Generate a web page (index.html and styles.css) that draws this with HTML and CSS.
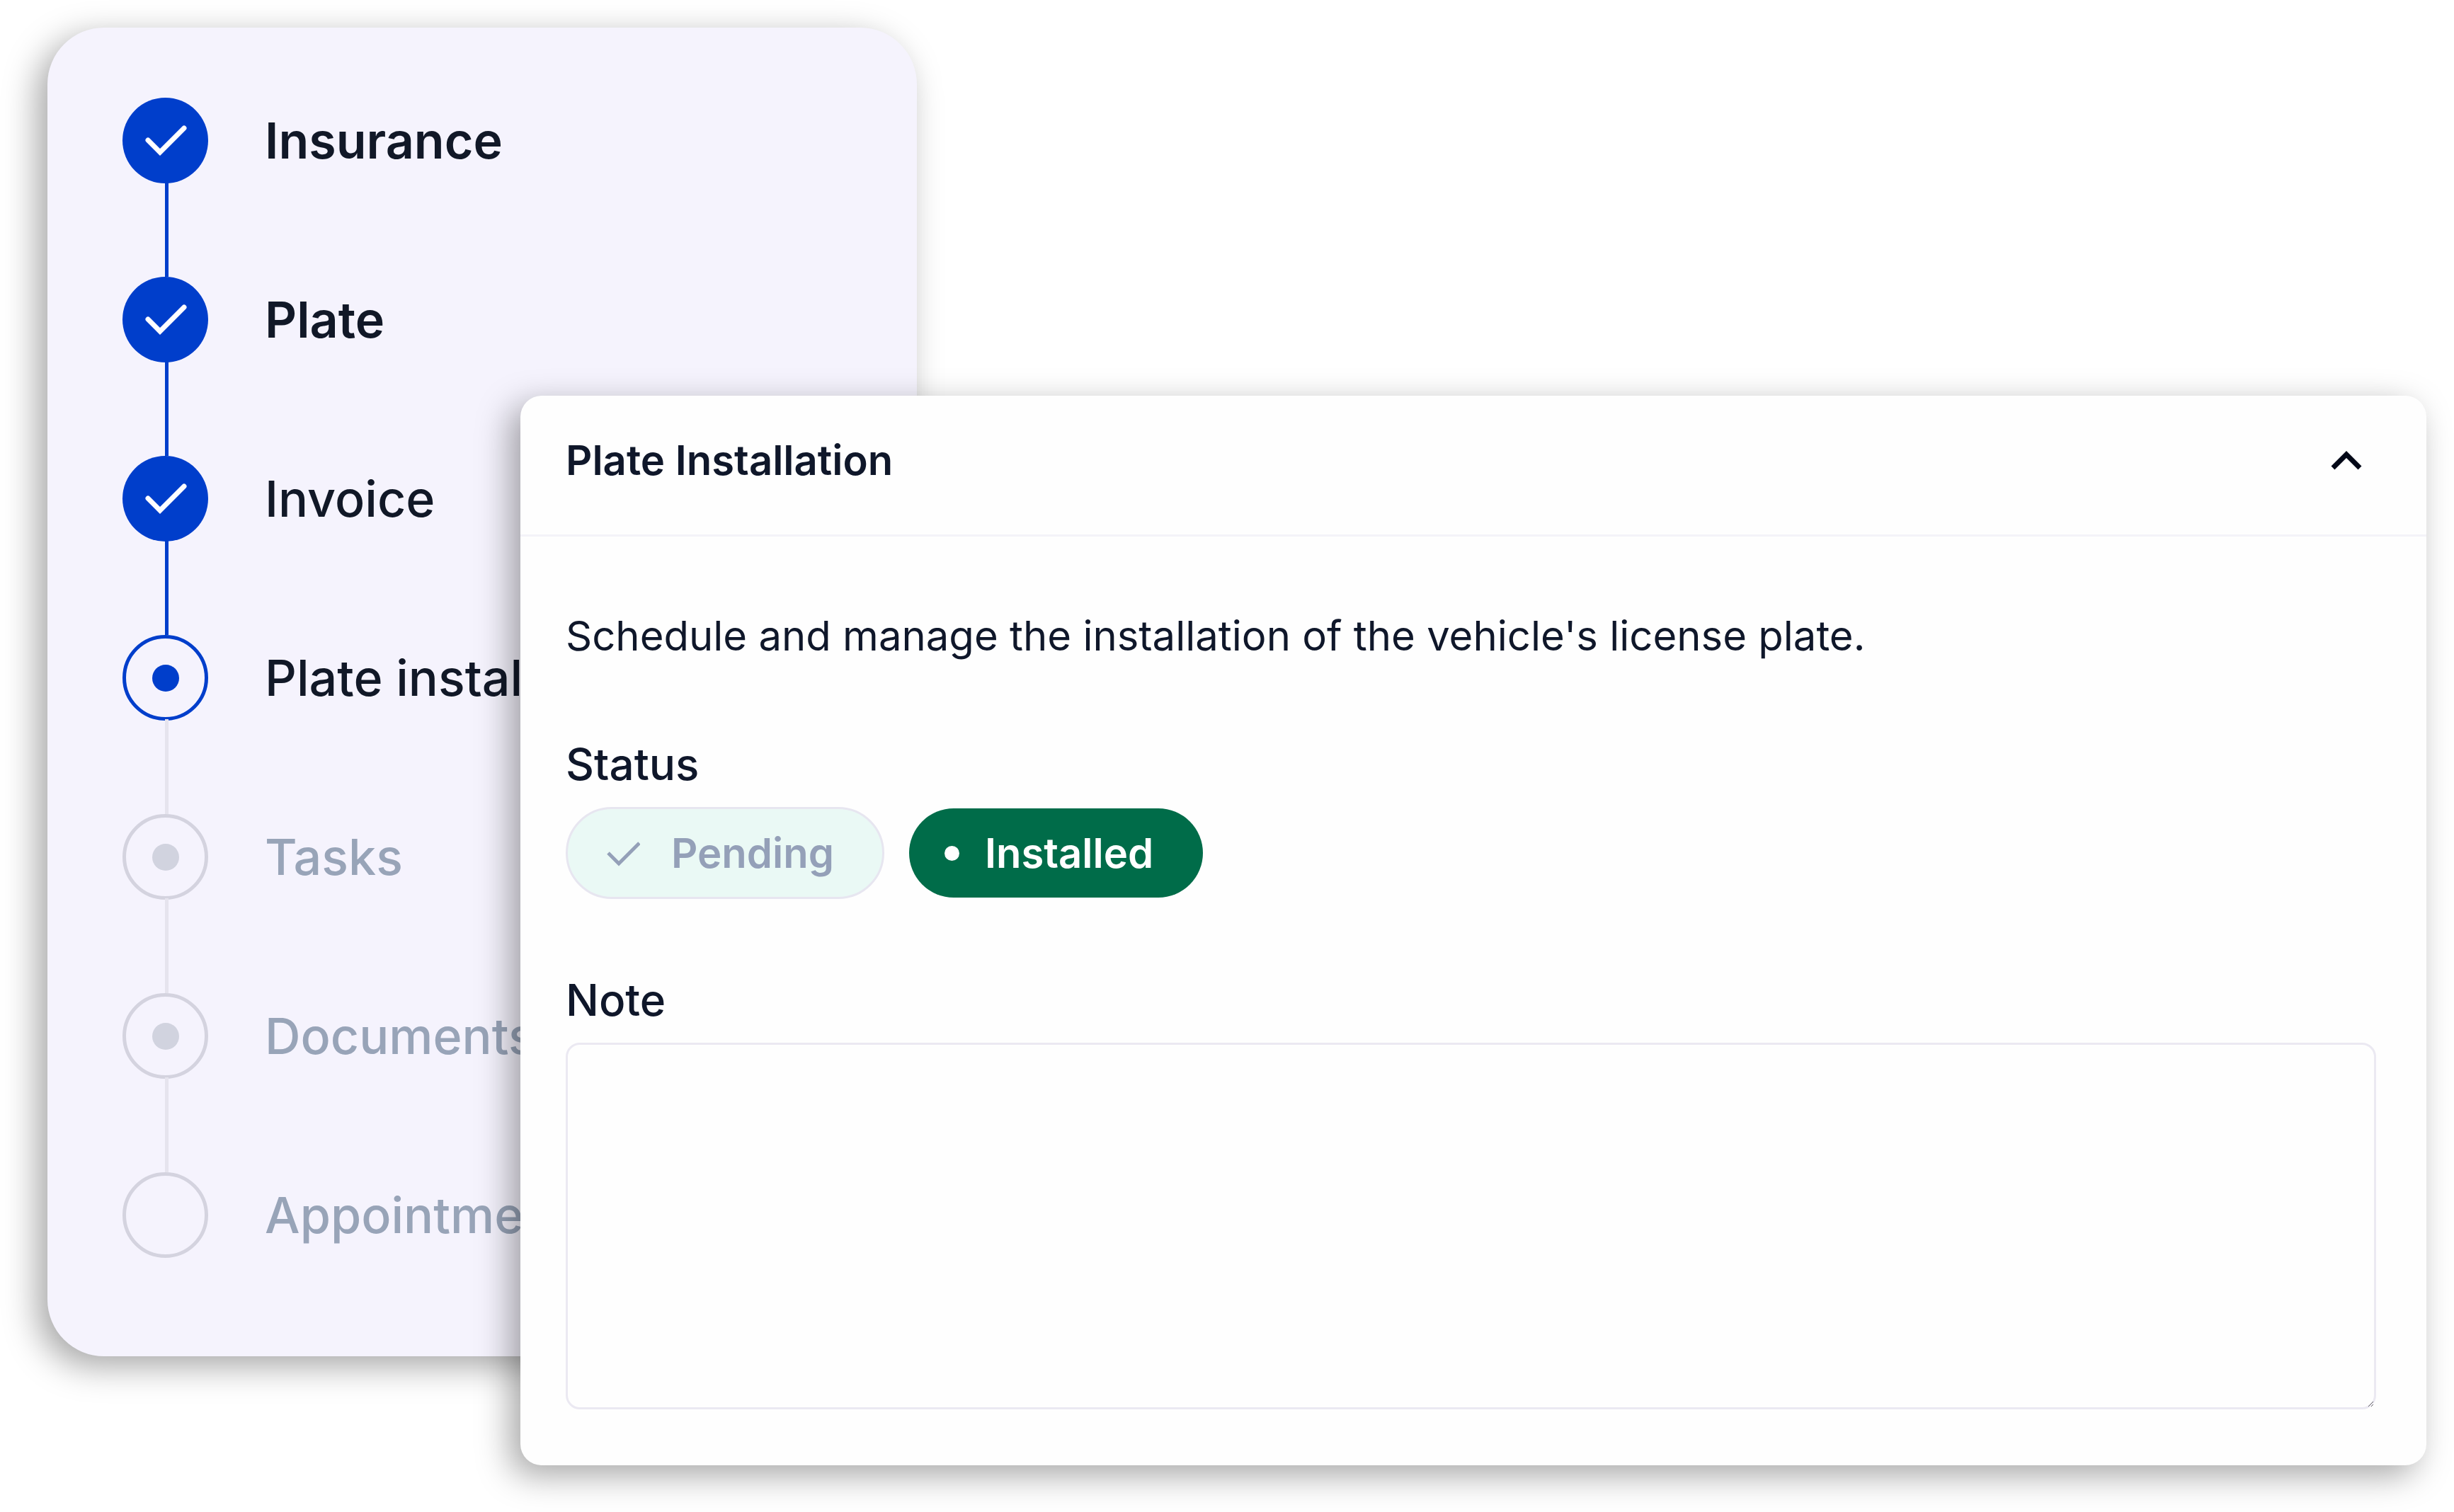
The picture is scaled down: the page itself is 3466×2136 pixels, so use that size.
FILE: index.html
```html
<!DOCTYPE html>
<html lang="en">
<head>
<meta charset="utf-8">
<meta name="viewport" content="width=device-width, initial-scale=1">
<title>Plate Installation</title>
<link rel="stylesheet" href="styles.css">
</head>
<body>
<main class="stage">
  <nav class="steps" aria-label="Progress">
    <ol class="step-list">
      <li class="step done">
        <span class="marker"><svg class="tick" viewBox="0 0 121 121" aria-hidden="true"><path d="M36 60 53 77 87 43"/></svg></span>
        <span class="label strong">Insurance</span>
      </li>
      <li class="step done">
        <span class="marker"><svg class="tick" viewBox="0 0 121 121" aria-hidden="true"><path d="M36 60 53 77 87 43"/></svg></span>
        <span class="label strong">Plate</span>
      </li>
      <li class="step done">
        <span class="marker"><svg class="tick" viewBox="0 0 121 121" aria-hidden="true"><path d="M36 60 53 77 87 43"/></svg></span>
        <span class="label">Invoice</span>
      </li>
      <li class="step current" aria-current="step">
        <span class="marker"><span class="dot"></span></span>
        <span class="label">Plate installation</span>
      </li>
      <li class="step">
        <span class="marker"><span class="dot"></span></span>
        <span class="label">Tasks</span>
      </li>
      <li class="step">
        <span class="marker"><span class="dot"></span></span>
        <span class="label">Documents</span>
      </li>
      <li class="step">
        <span class="marker"></span>
        <span class="label">Appointment</span>
      </li>
    </ol>
  </nav>

  <section class="panel" aria-labelledby="panel-title">
    <header class="panel-header">
      <h2 class="panel-title" id="panel-title">Plate Installation</h2>
      <button class="collapse" type="button" aria-label="Collapse" aria-expanded="true">
        <svg class="chevron" viewBox="0 0 48 48" aria-hidden="true"><path d="M5 35 24 16 43 35"/></svg>
      </button>
    </header>
    <div class="panel-body">
      <p class="description">Schedule and manage the installation of the vehicle's license plate.</p>
      <div class="field" role="group" aria-labelledby="status-label">
        <span class="field-label" id="status-label">Status</span>
        <div class="pills">
          <button class="pill pending" type="button">
            <svg class="pill-tick" viewBox="0 0 48 48" aria-hidden="true"><path d="M3 24 18 39 47 10"/></svg>
            Pending
          </button>
          <button class="pill installed" type="button" aria-pressed="true">
            <span class="pill-dot"></span>
            Installed
          </button>
        </div>
      </div>
      <div class="field">
        <label class="field-label" for="note">Note</label>
        <textarea class="note" id="note"></textarea>
      </div>
    </div>
  </section>
</main>
</body>
</html>
```
FILE: styles.css
```css
*,
*::before,
*::after {
  box-sizing: border-box;
}

body {
  margin: 0;
  background: #fff;
  color: #0f172a;
  font-family: Inter, "Liberation Sans", sans-serif;
}

.stage {
  display: grid;
  grid-template-columns: 668fr 560fr 2132fr;
  align-items: start;
  padding: 39px 39px 67px 67px;
}

.steps,
.panel {
  grid-row: 1;
  box-shadow: -14px 14px 48px rgba(0, 0, 0, 0.35);
}

.steps {
  grid-column: 1 / 3;
  padding: 99px 106px 139px;
  border-radius: 80px;
  background: #f5f3fd;
}

.step-list {
  margin: 0;
  padding: 0;
  list-style: none;
}

.step {
  display: grid;
  grid-template-columns: 121px 1fr;
  column-gap: 80px;
  align-items: center;
  color: #98a4b8;
}

/* connector down to the next step */
.step:not(:last-child)::after {
  content: "";
  width: 5px;
  height: 134px;
  margin: -2px 0 0 60px;
  background: #e6e4ee;
}

.step.done:not(:last-child)::after {
  background: #003ecb;
}

.marker {
  display: flex;
  align-items: center;
  justify-content: center;
  width: 121px;
  height: 121px;
  border: 5px solid #d4d3df;
  border-radius: 50%;
}

.done,
.current {
  color: #111827;
}

.done .marker {
  border: 0;
  background: #003ecb;
}

.current .marker {
  border-color: #003ecb;
}

.dot {
  width: 38px;
  height: 38px;
  border-radius: 50%;
  background: #d1d3df;
}

.current .dot {
  background: #003ecb;
}

.tick {
  width: 121px;
  height: 121px;
  fill: none;
  stroke: #fff;
  stroke-width: 7;
  stroke-linecap: round;
}

.label {
  font-size: 70px;
  font-weight: 500;
  line-height: 88px;
  white-space: nowrap;
}

.strong {
  font-weight: 600;
}

.panel {
  grid-column: 2 / 4;
  margin-top: 520px;
  border-radius: 30px;
  background: #fefefe;
}

.panel-header {
  display: flex;
  align-items: center;
  justify-content: space-between;
  padding: 57px 89px 71px 64px;
  border-bottom: 3px solid #f4f3f9;
}

.panel-title {
  margin: 0;
  font-size: 58px;
  font-weight: 600;
  line-height: 68px;
}

.collapse {
  display: flex;
  padding: 0;
  border: 0;
  background: none;
  color: #020817;
}

.chevron {
  width: 48px;
  height: 48px;
  fill: none;
  stroke: currentColor;
  stroke-width: 7;
}

.panel-body {
  display: flex;
  flex-direction: column;
  gap: 107px;
  padding: 101px 71px 79px 64px;
}

.description {
  margin: 0;
  font-size: 58px;
  line-height: 78px;
}

.field {
  display: flex;
  flex-direction: column;
  gap: 24px;
}

.field-label {
  font-size: 62px;
  font-weight: 500;
  line-height: 72px;
}

.pills {
  display: flex;
  align-items: center;
  gap: 35px;
}

.pill {
  display: flex;
  align-items: center;
  border-radius: 66px;
  font-family: inherit;
  font-size: 58px;
  font-weight: 600;
  line-height: 68px;
}

.pending {
  gap: 44px;
  padding: 28px 68px 28px 54px;
  border: 3px solid #e7e6f0;
  background: #eaf9f5;
  color: #94a0b8;
}

.installed {
  gap: 36px;
  padding: 29px 70px 29px 50px;
  border: 0;
  background: #006c49;
  color: #fff;
}

.pill-tick {
  width: 48px;
  height: 48px;
  fill: none;
  stroke: currentColor;
  stroke-width: 5;
}

.pill-dot {
  width: 21px;
  height: 21px;
  border-radius: 50%;
  background: #fff;
}

.note {
  display: block;
  width: 100%;
  height: 518px;
  padding: 24px;
  border: 3px solid #ebe9f2;
  border-radius: 20px;
  background: transparent;
  color: inherit;
  font: inherit;
  font-size: 58px;
  resize: vertical;
}
```
